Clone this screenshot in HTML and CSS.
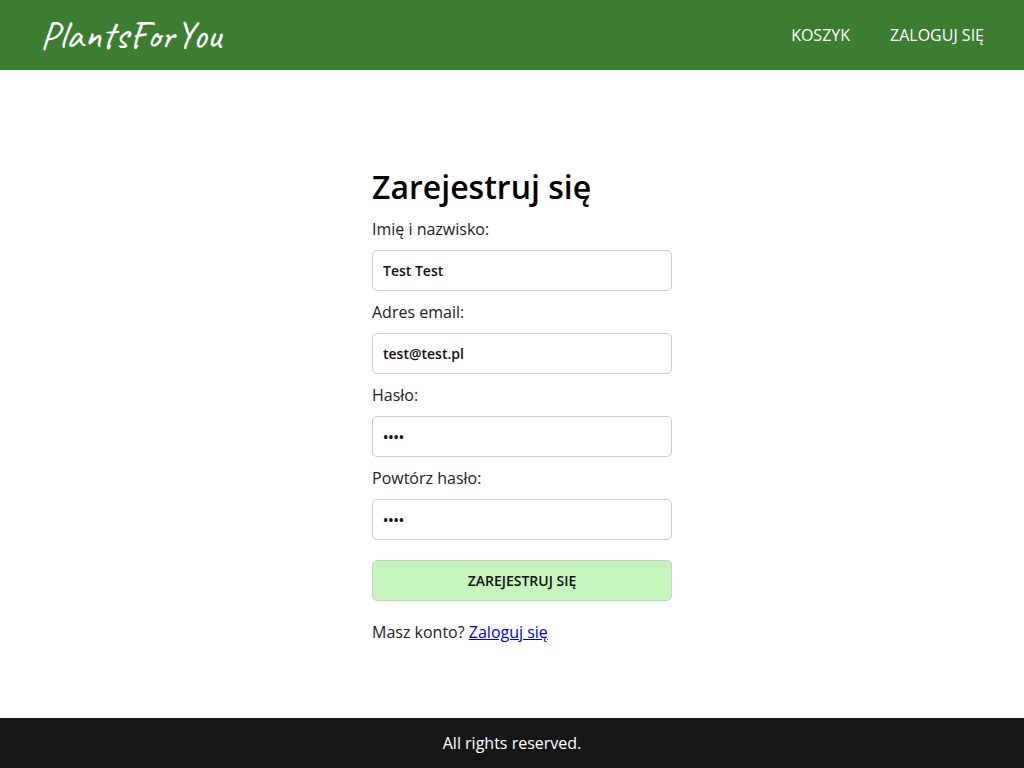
FILE: index.html
```html
<!DOCTYPE html>
<html lang="pl">
<head>
<meta charset="utf-8">
<title>PlantsForYou</title>
<link rel="stylesheet" href="styles.css">
</head>
<body>
<header class="header">
  <a class="logo" href="#">PlantsForYou</a>
  <nav class="nav">
    <a class="nav-link" href="#">KOSZYK</a>
    <a class="nav-link" href="#">ZALOGUJ SIĘ</a>
  </nav>
</header>
<main class="main">
  <form class="form">
    <h1 class="title">Zarejestruj się</h1>
    <label class="label" for="name">Imię i nazwisko:</label>
    <input class="input" id="name" type="text" value="Test Test">
    <label class="label" for="email">Adres email:</label>
    <input class="input" id="email" type="email" value="test@test.pl">
    <label class="label" for="password">Hasło:</label>
    <input class="input" id="password" type="password" value="test">
    <label class="label" for="repeat">Powtórz hasło:</label>
    <input class="input" id="repeat" type="password" value="test">
    <button class="button" type="submit">ZAREJESTRUJ SIĘ</button>
    <p class="hint">Masz konto? <a href="#">Zaloguj się</a></p>
  </form>
</main>
<footer class="footer">All rights reserved.</footer>
</body>
</html>
```
FILE: styles.css
```css
* { box-sizing: border-box; }
body {
  margin: 0;
  min-height: 100vh;
  display: flex;
  flex-direction: column;
  font-family: "Open Sans", sans-serif;
  font-size: 16px;
  font-weight: 400;
  line-height: 22px;
  color: #222;
  background: #fff;
}
.header {
  display: flex;
  align-items: center;
  justify-content: space-between;
  height: 70px;
  padding: 0 40px;
  background: #3c7d32;
}
.logo {
  font-family: Caveat, cursive;
  font-size: 40px;
  line-height: 50px;
  font-weight: 400;
  color: #fff;
  text-decoration: none;
}
.nav { display: flex; gap: 40px; }
.nav-link { color: #fff; font-weight: 500; text-decoration: none; }
.main {
  flex: 1;
  display: flex;
  justify-content: center;
  align-items: center;
  padding: 20px 0 0 20px;
}
.form { display: flex; flex-direction: column; width: 300px; }
.title { margin: 0 0 10px; font-size: 32px; line-height: 42px; font-weight: 600; color: #000; }
.label { margin-bottom: 10px; }
.input, .button {
  height: 41px;
  padding: 0 10px;
  border: 1px solid #ccc;
  border-radius: 5px;
  font-family: inherit;
  font-size: 14px;
  font-weight: 600;
  color: #111;
  background: #fff;
}
.input { width: 100%; margin-bottom: 10px; }
.button { margin: 10px 0 20px; background: #c5f5bd; }
.hint { margin: 0; }
.footer {
  padding: 14px;
  background: #171717;
  color: #fff;
  font-weight: 500;
  text-align: center;
}
```
